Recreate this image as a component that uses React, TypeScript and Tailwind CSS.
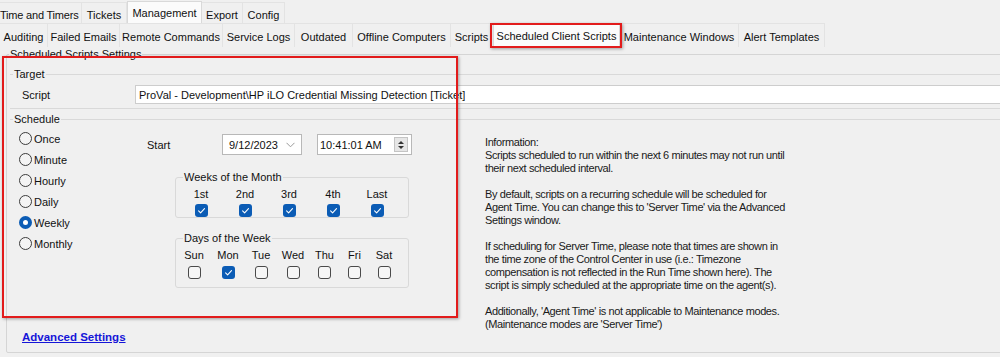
import React from "react";

function Tab1({ w, sel, children, extra }: { w: string; sel?: boolean; children: React.ReactNode; extra?: string }) {
  return sel ? (
    <div className={`${w} h-[22px] pt-[4px] text-center bg-[#fbfbfb] border-x border-t border-[#d9d9d9] ${extra ?? ""}`}>{children}</div>
  ) : (
    <div className={`${w} h-[21px] pt-[5px] text-center border-r border-t border-[#e3e3e3] whitespace-nowrap ${extra ?? ""}`}>{children}</div>
  );
}

function Tab2({ w, sel, children }: { w: string; sel?: boolean; children: React.ReactNode }) {
  return sel ? (
    <div className={`${w} h-[24px] pt-[5px] text-center bg-[#fbfbfb] border-x border-t border-[#d9d9d9] whitespace-nowrap`}>{children}</div>
  ) : (
    <div className={`${w} h-[24px] pt-[6px] text-center border-r border-t border-[#e3e3e3] whitespace-nowrap`}>{children}</div>
  );
}

function Radio({ label, sel }: { label: string; sel?: boolean }) {
  return (
    <div className="h-[21px] flex items-center gap-[2px]">
      {sel ? (
        <div className="w-[13px] h-[13px] rounded-full border-[4px] border-[#0b5cb5] bg-white" />
      ) : (
        <div className="w-[13px] h-[13px] rounded-full border border-[#3c3c3c] bg-[#f4f4f4]" />
      )}
      <span>{label}</span>
    </div>
  );
}

function Box({ checked }: { checked?: boolean }) {
  return checked ? (
    <div className="w-[13px] h-[13px] rounded-[3px] bg-[#0b5cb5] flex items-center justify-center">
      <svg viewBox="0 0 13 13" className="w-[13px] h-[13px]">
        <path d="M3.6 6.9 L5.6 8.8 L9.5 4.7" fill="none" stroke="white" strokeWidth="1.1" strokeLinecap="round" strokeLinejoin="round" />
      </svg>
    </div>
  ) : (
    <div className="w-[13px] h-[13px] rounded-[3px] border border-[#4a4a4a] bg-[#f6f6f6]" />
  );
}

function Col({ w, label }: { w: string; label: string }) {
  return (
    <div className={`${w} flex flex-col items-center`}>
      <span className="leading-[14px] whitespace-nowrap">{label}</span>
    </div>
  );
}

function BoxCol({ w, checked }: { w: string; checked?: boolean }) {
  return (
    <div className={`${w} flex justify-center`}>
      <Box checked={checked} />
    </div>
  );
}

const info = [
  "Information:",
  "Scripts scheduled to run within the next 6 minutes may not run until",
  "their next scheduled interval.",
  "",
  "By default, scripts on a recurring schedule will be scheduled for",
  "Agent Time. You can change this to 'Server Time' via the Advanced",
  "Settings window.",
  "",
  "If scheduling for Server Time, please note that times are shown in",
  "the time zone of the Control Center in use (i.e.: Timezone",
  "compensation is not reflected in the Run Time shown here). The",
  "script is simply scheduled at the appropriate time on the agent(s).",
  "",
  "Additionally, 'Agent Time' is not applicable to Maintenance modes.",
  "(Maintenance modes are 'Server Time')",
];

export default function App() {
  return (
    <div className="relative w-[1000px] h-[357px] overflow-hidden bg-[#f0f0f0] text-[11px] leading-[14px] text-[#111] font-['Liberation_Sans',Arial,sans-serif]">
      {/* Top tab row */}
      <div className="flex h-[23px] items-end">
        <div className="w-[82px] h-[21px] pt-[5px] border-r border-t border-[#e3e3e3] whitespace-nowrap tracking-[-0.2px]">Time and Timers</div>
        <Tab1 w="w-[45px]">Tickets</Tab1>
        <Tab1 w="w-[75px]" sel>Management</Tab1>
        <Tab1 w="w-[41px]">Export</Tab1>
        <Tab1 w="w-[42px]">Config</Tab1>
      </div>
      {/* Second tab row */}
      <div className="flex h-[24px] items-end">
        <Tab2 w="w-[48px]">Auditing</Tab2>
        <Tab2 w="w-[72px]">Failed Emails</Tab2>
        <Tab2 w="w-[103px]">Remote Commands</Tab2>
        <Tab2 w="w-[72px]">Service Logs</Tab2>
        <Tab2 w="w-[58px]">Outdated</Tab2>
        <Tab2 w="w-[98px]">Offline Computers</Tab2>
        <Tab2 w="w-[42px]">Scripts</Tab2>
        <Tab2 w="w-[127px]" sel>Scheduled Client Scripts</Tab2>
        <Tab2 w="w-[119px]">Maintenance Windows</Tab2>
        <Tab2 w="w-[86px]">Alert Templates</Tab2>
      </div>

      {/* Outer group */}
      <fieldset className="ml-[6px] w-[1100px] h-[306px] border border-[#d5d5d5] rounded-[2px]">
        <legend className="ml-[2px] px-[1px] leading-[14px]">Scheduled Scripts Settings</legend>

        {/* Target */}
        <fieldset className="mt-[6px] ml-[3px] border-t border-b border-[#d9d9d9] pb-[4px]">
          <legend className="ml-[3px] px-[1px] leading-[14px]">Target</legend>
          <div className="flex items-center pt-[4px]">
            <span className="w-[125px] shrink-0 pl-[12px]">Script</span>
            <div className="w-[950px] shrink-0 h-[19px] bg-white border border-r-0 border-[#cdcdcd] flex items-center pl-[3px] whitespace-nowrap">
              {"ProVal - Development\\HP iLO Credential Missing Detection [Ticket]"}
            </div>
          </div>
        </fieldset>

        {/* Schedule */}
        <fieldset className="mt-[3px] ml-[3px] border-t border-[#d9d9d9]">
          <legend className="ml-[3px] px-[1px] leading-[14px]">Schedule</legend>
          <div className="flex">
            <div className="w-[475px] shrink-0 flex flex-col">
              <div className="flex">
                <div className="w-[137px] pl-[9px] pt-[2px] flex flex-col">
                  <Radio label="Once" />
                  <Radio label="Minute" />
                  <Radio label="Hourly" />
                  <Radio label="Daily" />
                  <Radio label="Weekly" sel />
                  <Radio label="Monthly" />
                </div>
                <div className="flex-1 flex flex-col">
                  <div className="mt-[8px] h-[21px] flex items-center">
                    <span className="w-[75px]">Start</span>
                    <div className="w-[80px] h-[21px] bg-white border border-[#b8b8b8] flex items-center justify-between pl-[6px] pr-[6px]">
                      <span>9/12/2023</span>
                      <svg viewBox="0 0 9 6" className="w-[9px] h-[6px]">
                        <polyline points="0.5,0.8 4.5,4.8 8.5,0.8" fill="none" stroke="#9a9a9a" strokeWidth="1" />
                      </svg>
                    </div>
                    <div className="ml-[15px] w-[95px] h-[21px] bg-white border border-[#b8b8b8] flex items-center justify-between pl-[2px] pr-[3px]">
                      <span>10:41:01 AM</span>
                      <div className="w-[14px] h-[15px] bg-[#e6e6e6] border border-[#c4c4c4] flex flex-col items-center justify-center gap-[2px]">
                        <svg viewBox="0 0 6 3" className="w-[6px] h-[3px]"><polygon points="0,3 3,0 6,3" fill="#333" /></svg>
                        <svg viewBox="0 0 6 3" className="w-[6px] h-[3px]"><polygon points="0,0 3,3 6,0" fill="#333" /></svg>
                      </div>
                    </div>
                  </div>

                  <fieldset className="mt-[15px] ml-[28px] w-[234px] border border-[#d9d9d9] rounded-[3px]">
                    <legend className="ml-[7px] px-[1px] leading-[14px]">Weeks of the Month</legend>
                    <div className="flex pt-[3px] pl-[3px]">
                      <Col w="w-[44px]" label="1st" />
                      <Col w="w-[44px]" label="2nd" />
                      <Col w="w-[44px]" label="3rd" />
                      <Col w="w-[44px]" label="4th" />
                      <Col w="w-[44px]" label="Last" />
                    </div>
                    <div className="flex mt-[3px] pl-[3px]">
                      <BoxCol w="w-[44px]" checked />
                      <BoxCol w="w-[44px]" checked />
                      <BoxCol w="w-[44px]" checked />
                      <BoxCol w="w-[44px]" checked />
                      <BoxCol w="w-[44px]" checked />
                    </div>
                  </fieldset>

                  <fieldset className="mt-[13px] ml-[28px] w-[234px] border border-[#d9d9d9] rounded-[3px] pb-[8px]">
                    <legend className="ml-[7px] px-[1px] leading-[14px]">Days of the Week</legend>
                    <div className="flex pt-[3px] pl-[1px]">
                      <Col w="w-[34px]" label="Sun" />
                      <Col w="w-[34px]" label="Mon" />
                      <Col w="w-[32px]" label="Tue" />
                      <Col w="w-[32px]" label="Wed" />
                      <Col w="w-[31px]" label="Thu" />
                      <Col w="w-[29px]" label="Fri" />
                      <Col w="w-[30px]" label="Sat" />
                    </div>
                    <div className="flex mt-[4px] pl-[1px]">
                      <BoxCol w="w-[34px]" />
                      <BoxCol w="w-[34px]" checked />
                      <BoxCol w="w-[32px]" />
                      <BoxCol w="w-[32px]" />
                      <BoxCol w="w-[31px]" />
                      <BoxCol w="w-[29px]" />
                      <BoxCol w="w-[30px]" />
                    </div>
                  </fieldset>
                </div>
              </div>
              <a className="mt-[42px] ml-[12px] self-start text-[11.5px] font-bold text-[#1515d8] underline leading-[14px]">Advanced Settings</a>
            </div>

            <div className="pt-[10px] text-[11px] leading-[13px] tracking-[-0.4px] text-[#1a1a1a]">
              {info.map((l, i) => (
                <div key={i} className="h-[13px] whitespace-nowrap">{l}</div>
              ))}
            </div>
          </div>
        </fieldset>
      </fieldset>

      {/* Red annotation overlays */}
      <div className="absolute left-[490px] top-[23px] w-[132px] h-[25px] border-2 border-[#e21b1b] shadow-[1px_1px_3px_rgba(0,0,0,0.35)]" />
      <div className="absolute left-[2px] top-[56px] w-[456px] h-[262px] border-2 border-[#e21b1b] shadow-[1px_1px_3px_rgba(0,0,0,0.35)]" />
    </div>
  );
}
